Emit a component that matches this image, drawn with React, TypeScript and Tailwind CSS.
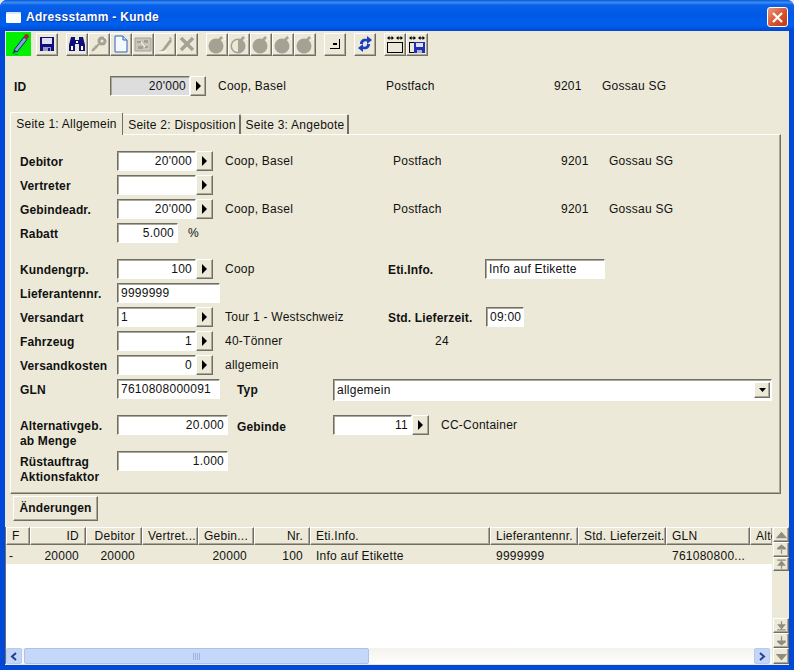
import type { ReactNode } from 'react';

const raised = 'border border-t-white border-l-white border-r-[#716f64] border-b-[#716f64] shadow-[inset_-1px_-1px_0_#aca899] bg-[#ece9d8]';
const sunkenEdge = 'border border-t-[#716f64] border-l-[#716f64] border-r-white border-b-white shadow-[inset_1px_1px_0_#aca899]';
const sunken = `${sunkenEdge} bg-white`;

function Arrow({ w = 17 }: { w?: number }) {
  return (
    <button className={`${raised} flex h-[20px] shrink-0 items-center justify-center`} style={{ width: w }}>
      <svg width="7" height="10" viewBox="0 0 7 10"><path d="M1 0l5 5-5 5z" fill="#000" /></svg>
    </button>
  );
}

function Input({ w, value, right, gray }: { w: number; value?: string; right?: boolean; gray?: boolean }) {
  return (
    <div
      className={`${sunkenEdge} ${gray ? 'bg-[#dddddd]' : 'bg-white'} flex h-[20px] shrink-0 items-center px-[3px] ${right ? 'justify-end' : ''}`}
      style={{ width: w }}
    >
      {value}
    </div>
  );
}

function Lookup({ value, right = true, w = 79 }: { value?: string; right?: boolean; w?: number }) {
  return (
    <div className="flex shrink-0">
      <Input w={w} value={value} right={right} />
      <Arrow />
    </div>
  );
}

function Row({ label, children, className = '' }: { label: string; children?: ReactNode; className?: string }) {
  return (
    <div className={`flex h-[20px] items-center ${className}`}>
      <span className="w-[97px] shrink-0 pt-[2px] font-bold tracking-[0.15px]">{label}</span>
      {children}
    </div>
  );
}

function Address({ name, offset = 12 }: { name: string; offset?: number }) {
  return (
    <div className="flex" style={{ marginLeft: offset }}>
      <span className="w-[168px]">{name}</span>
      <span className="w-[168px]">Postfach</span>
      <span className="w-[48px]">9201</span>
      <span>Gossau SG</span>
    </div>
  );
}

function Tool({ children }: { children: ReactNode }) {
  return <div className={`${raised} flex h-[23px] w-[22px] shrink-0 items-center justify-center`}>{children}</div>;
}

const gray = '#a5a294';

function Bomb({ half }: { half?: boolean }) {
  return (
    <svg width="19" height="19" viewBox="0 0 19 19">
      <circle cx="8" cy="11" r="7.500" fill={gray} />
      {half && <path d="M8 5a6 6 0 0 0 0 12z" fill="#ece9d8" />}
      <path d="M11 5l3-3" stroke={gray} strokeWidth="2.500" />
      <path d="M15 1h3M16 4h2" stroke="#fff" strokeWidth="1" />
    </svg>
  );
}

function Floppy() {
  return (
    <svg width="16" height="16" viewBox="0 0 16 16">
      <path d="M1 1h14v14H1z" fill="#10107c" />
      <path d="M3 2h10v6H3z" fill="#dfe0f5" />
      <path d="M4 11h8v4H4z" fill="#9a9ac8" />
      <path d="M9 12h2v3H9z" fill="#10107c" />
    </svg>
  );
}

function FrameArrows({ save }: { save?: boolean }) {
  return (
    <svg width="18" height="19" viewBox="0 0 18 19">
      <path d="M1.500 7.500h15M1.500 7v10.500M16.500 7v10.500M1 17.500h16" stroke="#000" fill="none" strokeWidth="1" />
      <path d="M2 3h5M11 3h5" stroke="#000" strokeWidth="1" />
      <path d="M1 3l2.500-2v4zM8 3L5.500 1v4zM10 3l2.500-2v4zM17 3l-2.500-2v4z" fill="#000" />
      {save && (
        <g>
          <path d="M6 7h11v11H6z" fill="#2030b0" />
          <path d="M8 8h7v4H8z" fill="#dfe0f5" />
          <path d="M9 15h5v3H9z" fill="#b0b0d8" />
        </g>
      )}
    </svg>
  );
}

function Toolbar() {
  return (
    <div className="flex h-[24px] items-center pl-px">
      <div className="flex h-[24px] w-[25px] items-center justify-center bg-[#00f000]">
        <svg width="22" height="22" viewBox="0 0 22 22">
          <path d="M6 17L16 4l3 2.500L9 19z" fill="#7aa5dc" stroke="#0a2a70" strokeWidth="1" />
          <circle cx="18.500" cy="3.500" r="2.400" fill="#a82828" />
          <path d="M6 17l-1 3 3-1" fill="#222" />
          <path d="M4 20l6 2" stroke="#0a8a8a" />
        </svg>
      </div>
      <div className="ml-[5px]"><Tool><Floppy /></Tool></div>
      <div className="ml-[8px] flex">
        <Tool>
          <svg width="18" height="16" viewBox="0 0 18 16">
            <path d="M3 1h4v3h4V1h4l2 8v6h-6V8H7v7H1V9z" fill="#10107c" />
            <path d="M3 10h2v4H3zM13 10h2v4h-2z" fill="#fff" />
            <path d="M8 5h2v2H8z" fill="#fff" />
          </svg>
        </Tool>
        <Tool>
          <svg width="18" height="18" viewBox="0 0 18 18">
            <circle cx="12" cy="6" r="4.500" fill={gray} />
            <circle cx="12" cy="6" r="1.500" fill="#ece9d8" />
            <path d="M9 9l-7 7M3 13l2 2M5 11l2 2" stroke={gray} strokeWidth="2" />
            <path d="M14 2l3 2" stroke="#fff" />
          </svg>
        </Tool>
        <Tool>
          <svg width="14" height="18" viewBox="0 0 14 18">
            <path d="M1 1h8l4 4v12H1z" fill="#f4f8ff" stroke="#2f62c0" />
            <path d="M9 1v4h4" fill="#cfe0fa" stroke="#2f62c0" />
          </svg>
        </Tool>
        <Tool>
          <svg width="18" height="18" viewBox="0 0 18 18">
            <path d="M1 3h16v13H1z" fill="#c9c6b7" stroke={gray} />
            <path d="M3 6h4v2H3zM10 5h4v3h-4zM4 11h5v3H4zM11 11h3v2h-3z" fill={gray} />
            <path d="M7 7l4 5" stroke="#fff" />
          </svg>
        </Tool>
        <Tool>
          <svg width="18" height="18" viewBox="0 0 18 18">
            <path d="M2 16c3 0 4-1 6-4l6-8 2 2-6 8c-2 2-4 3-8 2z" fill={gray} />
            <path d="M13 3l1-1 2 2-1 1z" fill={gray} />
            <path d="M3 17h8" stroke="#fff" />
          </svg>
        </Tool>
        <Tool>
          <svg width="16" height="16" viewBox="0 0 16 16">
            <path d="M2 2l12 12M14 2L2 14" stroke={gray} strokeWidth="3.500" />
          </svg>
        </Tool>
      </div>
      <div className="ml-[8px] flex">
        <Tool><Bomb /></Tool>
        <Tool><Bomb half /></Tool>
        <Tool><Bomb /></Tool>
        <Tool><Bomb /></Tool>
        <Tool><Bomb /></Tool>
      </div>
      <div className="ml-[8px]">
        <Tool>
          <svg width="12" height="12" viewBox="0 0 12 12">
            <path d="M1 10.500h10M10.500 1v10" stroke="#000" />
            <path d="M4 5h4v2H4z" fill="#000" />
          </svg>
        </Tool>
      </div>
      <div className="ml-[8px]">
        <Tool>
          <svg width="16" height="18" viewBox="0 0 16 18">
            <path d="M3 9c0-4 3-6 7-5V1l5 4-5 4V6.500C7 6 6 7 6 9z" fill="#1840c0" />
            <path d="M13 9c0 4-3 6-7 5v3l-5-4 5-4v2.500c3 .5 4-.5 4-2.500z" fill="#1840c0" />
          </svg>
        </Tool>
      </div>
      <div className="ml-[8px] flex">
        <Tool><FrameArrows /></Tool>
        <Tool><FrameArrows save /></Tool>
      </div>
    </div>
  );
}

function Tabs() {
  return (
    <div className="relative z-10 ml-[5px] mt-[14px] flex h-[24px] items-end">
      <div className="mb-[-1px] flex h-[23px] w-[113px] items-center justify-center rounded-t-[2px] border border-b-0 border-t-white border-l-white border-r-[#716f64] bg-[#ece9d8]">
        Seite 1: Allgemein
      </div>
      <div className="flex h-[20px] w-[118px] items-center justify-center rounded-t-[2px] border-t border-r-2 border-t-white border-r-[#716f64] bg-[#ece9d8] pl-[2px]">
        Seite 2: Disposition
      </div>
      <div className="flex h-[20px] w-[108px] items-center justify-center rounded-t-[2px] border-t border-r-2 border-t-white border-r-[#716f64] bg-[#ece9d8] pl-[2px]">
        Seite 3: Angebote
      </div>
    </div>
  );
}

function FormPanel() {
  return (
    <div className="ml-[5px] flex h-[360px] w-[771px] flex-col gap-[4px] border border-t-white border-l-white border-r-[#716f64] border-b-[#716f64] pl-[9px] pt-[16px] shadow-[inset_-1px_-1px_0_#aca899]">
      <Row label="Debitor"><Lookup value="20'000" /><Address name="Coop, Basel" /></Row>
      <Row label="Vertreter"><Lookup /></Row>
      <Row label="Gebindeadr."><Lookup value="20'000" /><Address name="Coop, Basel" /></Row>
      <Row label="Rabatt"><Input w={61} value="5.000" right /><span className="ml-[10px]">%</span></Row>
      <Row label="Kundengrp." className="mt-[12px]">
        <Lookup value="100" />
        <span className="ml-[12px] w-[163px]">Coop</span>
        <span className="w-[97px] pt-[2px] font-bold tracking-[0.15px]">Eti.Info.</span>
        <Input w={120} value="Info auf Etikette" />
      </Row>
      <Row label="Lieferantennr."><Input w={103} value="9999999" /></Row>
      <Row label="Versandart">
        <Lookup value="1" right={false} />
        <span className="ml-[12px] w-[163px] whitespace-nowrap">Tour 1 - Westschweiz</span>
        <span className="w-[98px] pt-[2px] font-bold tracking-[0.15px]">Std. Lieferzeit.</span>
        <Input w={38} value="09:00" />
      </Row>
      <Row label="Fahrzeug">
        <Lookup value="1" />
        <span className="ml-[12px] w-[210px]">40-Tönner</span>
        <span>24</span>
      </Row>
      <Row label="Versandkosten"><Lookup value="0" /><span className="ml-[12px]">allgemein</span></Row>
      <Row label="GLN">
        <Input w={103} value="7610808000091" />
        <span className="ml-[17px] w-[96px] pt-[2px] font-bold tracking-[0.15px]">Typ</span>
        <div className={`${sunken} mt-[2px] flex h-[22px] w-[439px] items-center justify-between px-[3px]`}>
          allgemein
          <div className={`${raised} mr-[-2px] flex h-[16px] w-[16px] items-center justify-center`}>
            <svg width="7" height="4" viewBox="0 0 7 4"><path d="M0 0h7L3.500 4z" fill="#000" /></svg>
          </div>
        </div>
      </Row>
      <div className="mt-[12px] flex h-[32px]">
        <span className="w-[97px] shrink-0 pt-[4px] font-bold leading-[15px] tracking-[0.15px]">Alternativgeb.<br />ab Menge</span>
        <Input w={111} value="20.000" right />
        <span className="ml-[9px] mt-[3px] w-[96px] font-bold tracking-[0.15px]">Gebinde</span>
        <Lookup value="11" />
        <span className="ml-[12px] mt-[1px]">CC-Container</span>
      </div>
      <div className="flex h-[32px]">
        <span className="w-[97px] shrink-0 pt-[4px] font-bold leading-[15px] tracking-[0.15px]">Rüstauftrag<br />Aktionsfaktor</span>
        <Input w={111} value="1.000" right />
      </div>
    </div>
  );
}

const cols: { label: string; w: number; right?: boolean; cellRight?: boolean; cell?: string }[] = [
  { label: 'F', w: 24, cell: '-' },
  { label: 'ID', w: 56, right: true, cellRight: true, cell: '20000' },
  { label: 'Debitor', w: 56, right: true, cellRight: true, cell: '20000' },
  { label: 'Vertret...', w: 56, cellRight: true },
  { label: 'Gebin...', w: 56, cell: '20000', cellRight: true },
  { label: 'Nr.', w: 56, right: true, cellRight: true, cell: '100' },
  { label: 'Eti.Info.', w: 180, cell: 'Info auf Etikette' },
  { label: 'Lieferantennr.', w: 88, cell: '9999999' },
  { label: 'Std. Lieferzeit.', w: 88 },
  { label: 'GLN', w: 84, cell: '761080800...' },
  { label: 'Alte', w: 23 },
];

function VBtn({ d, h = 15 }: { d: string; h?: number }) {
  return (
    <div className={`${raised} flex w-[16px] items-center justify-center`} style={{ height: h }}>
      <svg width="11" height="11" viewBox="0 0 9 9"><path d={d} fill="#8f8d7e" stroke="#8f8d7e" strokeWidth="1" /></svg>
    </div>
  );
}

function Grid() {
  return (
    <div className="mt-[6px] flex h-[137px] border-l border-[#716f64]">
      <div className="flex w-[766px] flex-col">
        <div className="flex h-[18px] overflow-hidden">
          {cols.map((c) => (
            <div
              key={c.label}
              style={{ width: c.w }}
              className={`${raised} flex shrink-0 items-center overflow-hidden whitespace-nowrap pl-[5px] pr-[6px] ${c.right ? 'justify-end' : ''}`}
            >
              {c.label}
            </div>
          ))}
        </div>
        <div className="mt-[2px] flex h-[17px] items-center overflow-hidden bg-[#ece9d8]">
          {cols.map((c, i) => (
            <div
              key={c.label}
              style={{ width: c.w }}
              className={`flex shrink-0 overflow-hidden whitespace-nowrap ${i === 0 ? 'pl-[3px]' : 'pl-[6px]'} ${c.cellRight ? 'justify-end pr-[7px]' : 'pr-[2px]'}`}
            >
              {c.cell}
            </div>
          ))}
        </div>
        <div className="flex-1 bg-white" />
        <div className="flex h-[16px] bg-gradient-to-b from-[#f3f2ec] to-[#fefefe] pr-[2px]">
          <div className="flex w-[16px] items-center justify-center rounded-[2px] border border-[#b6cbf0] bg-[#c4d5f7]">
            <svg width="8" height="9" viewBox="0 0 8 9"><path d="M6 1L2 4.500 6 8" fill="none" stroke="#24408a" strokeWidth="2" /></svg>
          </div>
          <div className="ml-[2px] flex w-[345px] items-center justify-center rounded-[2px] border border-[#a9c2ee] bg-[#c5d8f9]">
            <svg width="8" height="7" viewBox="0 0 8 7"><path d="M.5 0v7M2.500 0v7M4.500 0v7M6.500 0v7" stroke="#9bb4e0" /></svg>
          </div>
          <div className="flex-1" />
          <div className="flex w-[16px] items-center justify-center rounded-[2px] border border-[#b6cbf0] bg-[#c4d5f7]">
            <svg width="8" height="9" viewBox="0 0 8 9"><path d="M2 1l4 3.500L2 8" fill="none" stroke="#24408a" strokeWidth="2" /></svg>
          </div>
        </div>
      </div>
      <div className="ml-px flex w-[16px] flex-col">
        <VBtn d="M4.500 3L1 7h7z" />
        <VBtn d="M1 4h7M4.500 1L2 3h5zM4.500 5v3" />
        <VBtn d="M1 1h7M4.500 2L2 5h5zM4.500 5v3" h={14} />
        <div className="flex-1" />
        <VBtn d="M1 8h7M4.500 7L2 4h5zM4.500 1v3" />
        <VBtn d="M1 5h7M4.500 8L2 6h5zM4.500 1v4" />
        <VBtn d="M4.500 7L1 3h7z" h={16} />
      </div>
    </div>
  );
}

export default function App() {
  return (
    <div className="h-[670px] w-[794px] overflow-hidden bg-[#e8e8e8] font-['Liberation_Sans',Arial,sans-serif] text-[12px] tracking-[0.25px] text-[#111]">
      <div className="flex h-full flex-col rounded-t-[7px] bg-[#0048d8]">
        <div className="flex h-[31px] shrink-0 items-center justify-between rounded-t-[7px] bg-[linear-gradient(180deg,#0a5ad6_0%,#3a8cf4_8%,#0a62ea_16%,#0058e6_50%,#0060ee_80%,#0048d0_100%)] pl-[6px] pr-[6px]">
          <div className="flex items-center pt-[3px]">
            <div className="h-[11px] w-[15px] rounded-[1px] border-t-[2px] border-t-[#dbe6ff] bg-white" />
            <span className="ml-[5px] text-[12px] font-bold tracking-[0.3px] text-white [text-shadow:1px_1px_#0f3b9a]">Adressstamm - Kunde</span>
          </div>
          <div className="mt-[3px] flex h-[20px] w-[21px] items-center justify-center rounded-[3px] border border-white bg-[linear-gradient(135deg,#e89a80,#d8522c_55%,#c03a18)]">
            <svg width="13" height="13" viewBox="0 0 13 13"><path d="M2 2l9 9M11 2l-9 9" stroke="#fff" strokeWidth="2.200" /></svg>
          </div>
        </div>
        <div className="mx-[5px] flex h-[634px] shrink-0 flex-col bg-[#ece9d8] pt-px">
          <Toolbar />
          <div className="ml-[9px] mt-[20px] flex h-[20px] items-center">
            <span className="w-[96px] pt-[2px] font-bold">ID</span>
            <div className="flex">
              <Input w={80} value="20'000" right gray />
              <Arrow w={16} />
            </div>
            <Address name="Coop, Basel" />
          </div>
          <Tabs />
          <FormPanel />
          <div className="ml-[8px] mt-[2px]">
            <button className={`${raised} h-[25px] w-[85px] pb-px font-bold tracking-[0.15px]`}>Änderungen</button>
          </div>
          <Grid />
        </div>
      </div>
    </div>
  );
}
